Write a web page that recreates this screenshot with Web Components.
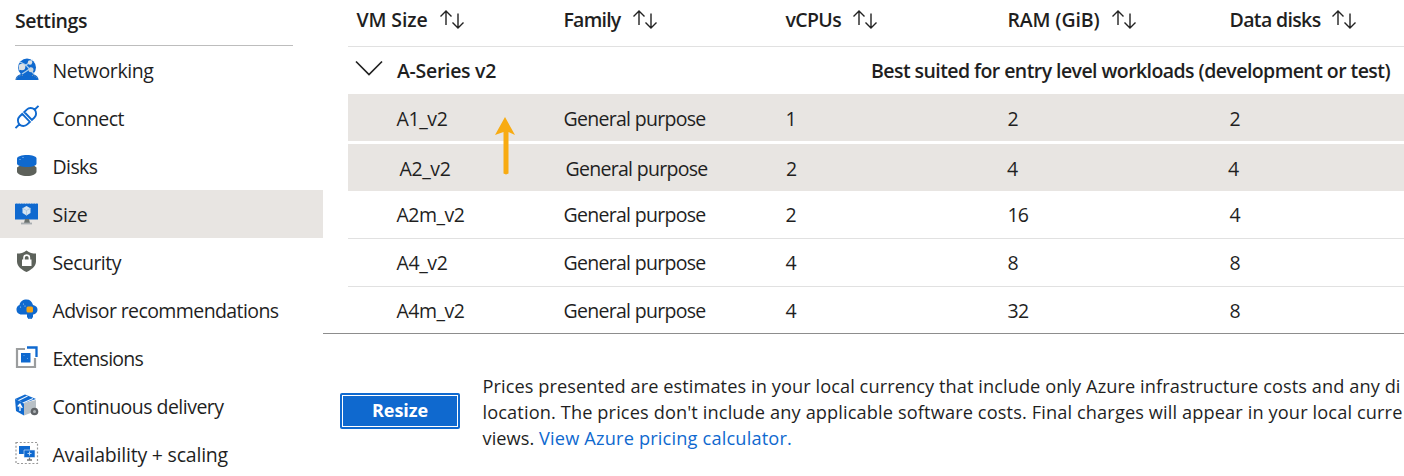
<!DOCTYPE html>
<html lang="en">
<head>
<meta charset="utf-8">
<title>Virtual machine - Size</title>
<style>
html,body{margin:0;height:476px;overflow:hidden;background:#fff}
body{font-family:"Open Sans","Noto Sans",sans-serif;font-size:19.500px;color:#1f1f1f}
</style>
</head>
<body>
<vm-page></vm-page>
<script>
const define = (name, html, setup) => customElements.define(name, class extends HTMLElement {
  connectedCallback() {
    if (this.shadowRoot) return;
    this.attachShadow({mode: 'open'}).innerHTML = html;
    if (setup) setup(this, this.shadowRoot);
  }
});

/* A single line of text tracked to occupy a given width */
define('fit-text', `<style>:host{display:inline-block;white-space:pre;vertical-align:top}</style><span><slot></slot></span>`, (el, root) => {
  const s = root.querySelector('span');
  const w = +el.getAttribute('w');
  const n = el.textContent.length;
  if (w) s.style.letterSpacing = ((w - s.getBoundingClientRect().width) / n).toFixed(3) + 'px';
});

const B = '#0f69cf';
const icons = {
  networking: `<path d="M.5 23c0-3.500 3-5.500 6-6h11c3 .5 6 2.500 6 6z" fill="${B}"/><path d="M1 22.500c1-3 4-4.200 7-4.200h8c3 0 6 1.200 7 4.200" fill="none" stroke="#8e9faa" stroke-dasharray="1 1.500"/><circle cx="12" cy="10.500" r="9" fill="${B}"/><path d="M5 5l6 3 7-5M4 13l7-5 8 9M7 17l9-6" stroke="#a9cdec" stroke-width="1.300" fill="none"/><circle cx="7" cy="10" r="3.300" fill="#dce0e3"/><circle cx="15" cy="5.500" r="2.200" fill="#dce0e3"/><circle cx="16" cy="12.800" r="2.500" fill="#c9d4dc"/>`,
  connect: `<g transform="rotate(-44 12 12)" fill="none" stroke="${B}" stroke-width="1.900"><path d="M-4 12h5.500M22.500 12h5.500M10.700 6.500v11H7a5.500 5.500 0 0 1 0-11zM13.500 6.500v11H17a5.500 5.500 0 0 0 0-11z"/></g>`,
  disks: `<path d="M2 14.500v4c0 2.500 4.500 4.500 10 4.500s9.500-2 9.500-4.500v-4L19 12.500H5z" fill="#5d615a"/><path d="M2 5.500v5c0 2 4.500 3.500 10 3.500s9.500-1.500 9.500-3.500v-5C21.500 3.300 17 2 12 2S2 3.300 2 5.500z" fill="${B}"/><g fill="#a9cdf2"><circle cx="5" cy="6.500" r=".6"/><circle cx="8" cy="4.500" r=".6"/></g>`,
  size: `<path d="M0 2.500h23v16H0z" fill="${B}"/><path d="M0 2.500h23" stroke="#a9c6e8" stroke-dasharray="1 1.500"/><path d="M10 18h4l1 4H9z" fill="#6b716e"/><path d="M6 22.500h11" stroke="#a8adb0" stroke-width="1.800"/><path d="M11.500 5l4 2.300v4.800l-4 2.400-4-2.400V7.300z" fill="#d5e4f1"/><path d="M11.500 9.500v5M7.500 7.300l4 2.200 4-2.200" stroke="#a9c4dc" stroke-width=".8" fill="none"/>`,
  security: `<path d="M11.500 1.500c3 2.500 6 3 9.500 3v8c0 5-5 8.500-9.500 10.500C7 21 2 17.500 2 12.500v-8c3.500 0 6.500-.5 9.500-3z" fill="#5d625b"/><path d="M7 10.500h9.500v6.500H7z" fill="#fff"/><path d="M9 11V8.800a2.700 2.700 0 0 1 5.400 0V11" stroke="#fff" stroke-width="1.600" fill="none"/>`,
  advisor: `<path d="M5.500 17.500A5 5 0 0 1 4.500 8C5 4.500 8 2.500 11.500 2.500S17 4.500 18 8c3 .5 4.500 2.500 4.500 4.700 0 3-2.500 4.800-5 4.800z" fill="${B}"/><path d="M12 16h6v4l-1.500 2h-1.200l-.3-2-.3 2h-1.200L12 20z" fill="${B}"/><rect x="11.500" y="9.500" width="6.500" height="6" rx="1.500" fill="#f7a516"/><g fill="#b7d4f3"><circle cx="5.500" cy="10" r=".6"/><circle cx="8.500" cy="7" r=".6"/><circle cx="10" cy="9" r=".6"/></g>`,
  extensions: `<path d="M10 4H2v18h18v-9" fill="none" stroke="#9b9d9e" stroke-width="2.200"/><path d="M12 2.500h9.500V12" fill="none" stroke="${B}" stroke-width="2.300"/><path d="M6 8h9.500v9.500H6z" fill="${B}"/><g fill="#6faae6"><circle cx="9" cy="10.500" r=".6"/><circle cx="12.500" cy="13.500" r=".6"/></g>`,
  delivery: `<path d="M9 10l12-3v11l-12 4.500z" fill="#b8c0c6"/><path d="M0 6l9 4v12.500L1 18z" fill="${B}"/><path d="M0 6l10-4.500L21 6 9 10z" fill="${B}"/><path d="M3.500 7.500l9-4.500M8 10l10-4.500" stroke="#e8f2fb" stroke-width="1.300"/><path d="M5 18v-6M2.800 13.500L5 11l2.200 4" stroke="#fff" stroke-width="1.300" fill="none"/><circle cx="19.500" cy="18.500" r="3.800" fill="#5f6367"/><circle cx="19.500" cy="18.500" r="1.500" fill="#abb0b3"/>`,
  availability: `<path d="M1 1.500h21.500v21H1z" fill="none" stroke="#999" stroke-width="1.200" stroke-dasharray="2 1.800"/><path d="M4 5h11v8H4z" fill="${B}"/><path d="M9 9h11v7.500H9z" fill="${B}" stroke="#e8f1fa" stroke-width=".6"/><path d="M12 19h5M14.500 16.500V19" stroke="#777" stroke-width="1.300"/><path d="M14.500 10.500v4M12.500 12.500h4" stroke="#b9d7f5" stroke-width="1.100"/>`
};
define('az-icon', `<style>:host{display:block;width:24px;height:24px;flex:none}svg{display:block;overflow:visible}</style><svg width="24" height="24" viewBox="0 0 24 24"></svg>`, (el, root) => {
  root.querySelector('svg').innerHTML = icons[el.getAttribute('name')];
});

define('nav-item', `<style>
:host{display:flex;align-items:center;gap:13.500px;height:48px;padding-left:15px;box-sizing:border-box}
:host([selected]){background:#e8e5e2}
::slotted(az-icon){margin-top:-3px}
.l{padding-top:1px}
</style><slot name="icon"></slot><div class="l"><slot></slot></div>`);

define('side-nav', `<style>
:host{display:block;width:323px;flex:none}
.h{margin:0 30px 0 15px;height:45px;border-bottom:1px solid #bdbdbd;line-height:42px;font-weight:600}
</style><div class="h"><fit-text w="72">Settings</fit-text></div>
${[['networking','Networking',101],['connect','Connect',71.500],['disks','Disks',45],['size','Size',35],['security','Security',68.500],['advisor','Advisor recommendations',226],['extensions','Extensions',90.500],['delivery','Continuous delivery',171],['availability','Availability + scaling',175.500]]
.map(([i,t,w]) => `<nav-item${i==='size'?' selected':''}><az-icon slot="icon" name="${i}"></az-icon><fit-text w="${w}">${t}</fit-text></nav-item>`).join('')}`);

define('sort-head', `<style>:host{display:flex;align-items:center;gap:12px;font-weight:600}svg{display:block;flex:none}</style>
<slot></slot><svg width="26" height="22" viewBox="0 0 26 22" fill="none" stroke="#222" stroke-width="1.400"><path d="M6 16V2M.5 7.500L6 2l5.500 5.500M18 4.500v14.500M12.500 13.500L18 19l5.500-5.500"/></svg>`);

define('size-row', `<style>
:host{display:grid;grid-template-columns:167px 222px 222px 222px 1fr;height:47px;padding-left:48.500px;line-height:48px;padding-top:1px;box-sizing:border-box;border-bottom:1px solid #e1e1e1}
:host([on]){background:#e8e5e2;border:0}
:host([head]){grid-template-columns:207px 222px 222px 222px 1fr;padding-left:8.500px;padding-top:0;line-height:38px}
:host([gap]){margin-bottom:3px}
:host([line]){height:48px;line-height:46px}
:host([last]){border:0;height:46px;line-height:46px}
:host([shift]){grid-template-columns:166px 220.500px 221px 221px 1fr;padding-left:51.500px;line-height:48px}
</style><slot></slot>`);

define('group-row', `<style>
:host{display:flex;align-items:center;height:47px;padding:0 14px 0 8px;box-sizing:border-box;font-weight:600}
svg{display:block;margin:-4px 14px 0 -1px}.b{margin-left:auto}
</style><svg width="28" height="17" viewBox="0 0 28 17" fill="none" stroke="#222" stroke-width="1.700"><path d="M1 1.500l13 13 13-13"/></svg>
<slot></slot><div class="b"><slot name="note"></slot></div>`);

const row = (attrs, cells) => `<size-row ${attrs}>${cells.map(([t,w]) => `<div><fit-text w="${w||0}">${t}</fit-text></div>`).join('')}</size-row>`;
const gp = ['General purpose', 142];
define('size-table', `<style>
:host{display:block;position:relative;margin-left:25px}
.a{position:absolute;left:147px;top:117px}
sort-head{height:39px}
</style>
<size-row head>${[['VM Size',71],['Family',57],['vCPUs',55.500],['RAM (GiB)',92],['Data disks',91]].map(([t,w]) => `<sort-head><fit-text w="${w}">${t}</fit-text></sort-head>`).join('')}</size-row>
<group-row><fit-text w="99">A-Series v2</fit-text><fit-text slot="note" w="519">Best suited for entry level workloads (development or test)</fit-text></group-row>
${row('on gap',[['A1_v2',51],gp,['1'],['2'],['2']])}
${row('on shift',[['A2_v2',51],gp,['2'],['4'],['4']])}
${row('line',[['A2m_v2',68],gp,['2'],['16',20.500],['4']])}
${row('line',[['A4_v2',51],gp,['4'],['8'],['8']])}
${row('last',[['A4m_v2',68],gp,['4'],['32',21],['8']])}
<svg class="a" width="22" height="58" viewBox="0 0 22 58"><path d="M10 0L20 18l-6.500-3V56.500l-2.500 1-2.500-1V15L0 18z" fill="#f8ab12"/></svg>`);

define('resize-button', `<style>
:host{display:block;width:120px;height:36px;flex:none;background:#0f69cf;padding:2px;box-sizing:border-box;border-radius:2px;color:#fff;font-weight:700;font-size:18px}
div{height:32px;box-sizing:border-box;border:1px solid #fff;text-align:center;line-height:29px}
</style><div><slot></slot></div>`);

define('price-footer', `<style>
:host{display:flex;border-top:1px solid #8d8d8d;padding:39px 0 0 17px;gap:22.500px;font-size:18.200px;line-height:26px;white-space:nowrap}
resize-button{margin-top:20px}
a{color:#0f69cf;text-decoration:none}
p{margin:0}
</style><resize-button><fit-text w="56">Resize</fit-text></resize-button>
<div><p><fit-text w="918">Prices presented are estimates in your local currency that include only Azure infrastructure costs and any di</fit-text></p>
<p><fit-text w="920">location. The prices don't include any applicable software costs. Final charges will appear in your local curre</fit-text></p>
<p><fit-text w="56.500">views. </fit-text><a><fit-text w="253">View Azure pricing calculator.</fit-text></a></p></div>`);

define('vm-page', `<style>:host{display:flex;width:1404px;height:476px;overflow:hidden}main{flex:1;min-width:0}</style>
<side-nav></side-nav><main><size-table></size-table><price-footer></price-footer></main>`);
</script>
</body>
</html>
